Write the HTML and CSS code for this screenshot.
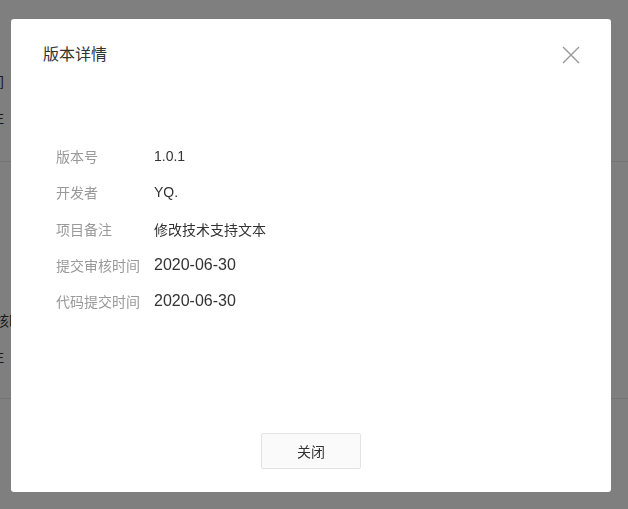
FILE: index.html
```html
<!DOCTYPE html>
<html lang="zh-CN">
<head>
  <meta charset="UTF-8" />
  <title>版本详情</title>
  <meta name="viewport" content="width=device-width, initial-scale=1.0" />
  <link rel="stylesheet" href="styles.css">
</head>
<body>
  <div class="page">
    <div class="page-row">时间</div>
    <div class="page-row">备注</div>
    <div class="page-line"></div>
    <div class="page-row page-row-low">审核时</div>
    <div class="page-row">备注</div>
    <div class="page-line page-line-low"></div>
  </div>

  <div class="mask">
    <div class="dialog">
      <div class="dialog-header">
        <h2>版本详情</h2>
        <span class="close">
          <svg width="18" height="18" viewBox="0 0 18 18">
            <path d="M1 1 L17 17 M17 1 L1 17" stroke="#999" stroke-width="1.4" fill="none" />
          </svg>
        </span>
      </div>

      <div class="dialog-body">
        <div class="info-row">
          <span class="label">版本号</span>
          <span class="value num small">1.0.1</span>
        </div>
        <div class="info-row">
          <span class="label">开发者</span>
          <span class="value num small">YQ.</span>
        </div>
        <div class="info-row">
          <span class="label">项目备注</span>
          <span class="value">修改技术支持文本</span>
        </div>
        <div class="info-row">
          <span class="label">提交审核时间</span>
          <span class="value num">2020-06-30</span>
        </div>
        <div class="info-row">
          <span class="label">代码提交时间</span>
          <span class="value num">2020-06-30</span>
        </div>
      </div>

      <div class="dialog-footer">
        <button class="btn">关闭</button>
      </div>
    </div>
  </div>
</body>
</html>
```

FILE: styles.css
```css
* {
  box-sizing: border-box;
}

body {
  margin: 0;
  font-family: "Liberation Sans", Arial, "Noto Sans CJK SC", sans-serif;
  background: #ffffff;
  color: #333;
  width: 628px;
  height: 509px;
  overflow: hidden;
}

/* page behind the mask */
.page {
  padding-top: 72px;
  font-size: 14px;
  color: #333;
}

.page-row {
  height: 36px;
  line-height: 20px;
  margin-left: -24px;
}

.page-row-low {
  margin-top: 149px;
  margin-left: -19px;
}

.page-line {
  height: 1px;
  background: #e8e8e8;
  margin-top: 17px;
}

.page-line-low {
  margin-top: 15px;
}

/* mask + dialog */
.mask {
  position: fixed;
  top: 0;
  left: 0;
  right: 0;
  bottom: 0;
  background: rgba(0, 0, 0, 0.5);
  padding: 19px 0 0 11px;
}

.dialog {
  width: 600px;
  height: 473px;
  background: #fff;
  border-radius: 3px;
  display: flex;
  flex-direction: column;
}

.dialog-header {
  display: flex;
  justify-content: space-between;
  align-items: center;
  height: 72px;
  padding: 0 31px 0 32px;
}

.dialog-header h2 {
  margin: 0;
  font-size: 16px;
  font-weight: normal;
  color: #333;
  line-height: 24px;
}

.close {
  display: flex;
  width: 18px;
  height: 18px;
}

.dialog-body {
  flex: 1;
  padding: 47px 0 0 45px;
}

.info-row {
  display: flex;
  align-items: center;
  height: 36.3px;
  font-size: 14px;
}

.label {
  width: 98px;
  color: #999;
}

.value {
  color: #333;
}

.value.num {
  font-size: 16px;
}

.value.small {
  font-size: 14px;
}

.dialog-footer {
  display: flex;
  justify-content: center;
  padding-bottom: 23px;
}

.btn {
  width: 100px;
  height: 36px;
  background: #fafafa;
  border: 1px solid #e3e3e3;
  border-radius: 2px;
  font-family: inherit;
  font-size: 14px;
  color: #333;
  cursor: pointer;
}
```
